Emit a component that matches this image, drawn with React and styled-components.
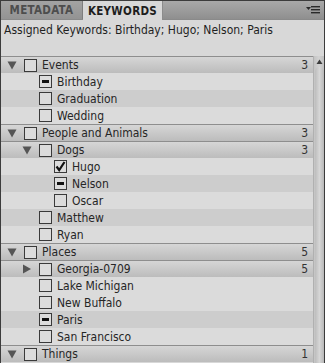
import styled, { createGlobalStyle } from "styled-components";

const GlobalStyle = createGlobalStyle`
  html, body {
    margin: 0;
    padding: 0;
    background: #d6d6d6;
  }
  * { box-sizing: border-box; }
`;

const Panel = styled.div`
  width: 325px;
  height: 363px;
  display: flex;
  flex-direction: column;
  border: 1px solid #3c3c3c;
  border-bottom: none;
  background: #d8d8d8;
  font-family: "DejaVu Sans Condensed", "DejaVu Sans", "Liberation Sans", sans-serif;
  font-stretch: semi-condensed;
  color: #262626;
  overflow: hidden;
`;

const TabBar = styled.div`
  height: 19px;
  display: flex;
  align-items: stretch;
  background: linear-gradient(#a9a9a9, #8f8f8f);
  border-bottom: 1px solid #8a8a8a;
`;

const Tab = styled.div`
  display: flex;
  align-items: center;
  justify-content: center;
  width: ${(p) => p.$width}px;
  font-size: 11.5px;
  font-weight: bold;
  letter-spacing: 0.3px;
  color: ${(p) => (p.$active ? "#1e1e1e" : "#4d4d4d")};
  background: ${(p) =>
    p.$active ? "#d8d8d8" : "linear-gradient(#a3a3a3, #939393)"};
  border-right: 1px solid ${(p) => (p.$active ? "#8c8c8c" : "#7e7e7e")};
  margin-bottom: ${(p) => (p.$active ? "-1px" : "0")};
`;

const TabSpacer = styled.div`
  flex: 1;
  display: flex;
  align-items: center;
  justify-content: flex-end;
  padding-right: 4px;
`;

const Assigned = styled.div`
  height: 36px;
  padding: 3px 0 0 3px;
  font-size: 12px;
  color: #1f1f1f;
`;

const TreeArea = styled.div`
  flex: 1;
  display: flex;
  min-height: 0;
`;

const TreeList = styled.div`
  flex: 1;
  display: flex;
  flex-direction: column;
`;

const Row = styled.div`
  height: 17px;
  flex: none;
  display: flex;
  align-items: center;
  padding-left: ${(p) => 6 + p.$level * 15}px;
  padding-right: 5px;
  font-size: 12px;
  background: ${(p) =>
    p.$header
      ? "linear-gradient(#d6d6d6, #bcbcbc)"
      : p.$shade
      ? "#cdcdcd"
      : "#dbdbdb"};
  border-top: ${(p) => (p.$header ? "1px solid #8e8e8e" : "none")};
`;

const Toggle = styled.div`
  width: 17px;
  height: 13px;
  display: flex;
  align-items: center;
  flex: none;
`;

const Box = styled.div`
  width: 13px;
  height: 13px;
  flex: none;
  border: 1px solid #3a3a3a;
  background: #dcdcdc;
  display: flex;
  align-items: center;
  justify-content: center;
  margin-right: 5px;
`;

const Dash = styled.div`
  width: 7px;
  height: 3px;
  background: #111;
`;

const Label = styled.span`
  flex: 1;
  white-space: nowrap;
`;

const Count = styled.span`
  color: #333;
`;

const Scrollbar = styled.div`
  width: 11px;
  flex: none;
  display: flex;
  flex-direction: column;
  align-items: center;
  background: linear-gradient(90deg, #c4c4c4, #d2d2d2, #c0c0c0);
  border-left: 1px solid #b0b0b0;
`;

const Thumb = styled.div`
  width: 9px;
  flex: 1;
  margin: 2px 0 0;
  border-radius: 5px 5px 0 0;
  background: linear-gradient(90deg, #bdbdbd, #d6d6d6, #b8b8b8);
`;

const rows = [
  { label: "Events", level: 0, header: true, open: true, count: 3 },
  { label: "Birthday", level: 1, state: "mixed" },
  { label: "Graduation", level: 1, shade: true },
  { label: "Wedding", level: 1 },
  { label: "People and Animals", level: 0, header: true, open: true, count: 3 },
  { label: "Dogs", level: 1, header: true, open: true, count: 3 },
  { label: "Hugo", level: 2, state: "checked" },
  { label: "Nelson", level: 2, state: "mixed", shade: true },
  { label: "Oscar", level: 2 },
  { label: "Matthew", level: 1, shade: true },
  { label: "Ryan", level: 1 },
  { label: "Places", level: 0, header: true, open: true, count: 5 },
  { label: "Georgia-0709", level: 1, header: true, open: false, count: 5 },
  { label: "Lake Michigan", level: 1 },
  { label: "New Buffalo", level: 1 },
  { label: "Paris", level: 1, state: "mixed", shade: true },
  { label: "San Francisco", level: 1 },
  { label: "Things", level: 0, header: true, open: true, count: 1 },
];

function Triangle({ open }) {
  return open ? (
    <svg width="10" height="9" viewBox="0 0 10 9">
      <path d="M0.5 0.5 H9.5 L5 8.5 Z" fill="#555" />
    </svg>
  ) : (
    <svg width="10" height="10" viewBox="0 0 10 10">
      <path d="M1 0.5 L9 5 L1 9.5 Z" fill="#555" />
    </svg>
  );
}

function Check({ state }) {
  return (
    <Box>
      {state === "mixed" && <Dash />}
      {state === "checked" && (
        <svg width="11" height="11" viewBox="0 0 11 11">
          <path
            d="M1.5 5.5 L4.2 9 L9.5 1"
            fill="none"
            stroke="#111"
            strokeWidth="2.2"
          />
        </svg>
      )}
    </Box>
  );
}

function MenuIcon() {
  return (
    <svg width="14" height="8" viewBox="0 0 14 8">
      <path d="M0 1 H5 L2.5 4 Z" fill="#2a2a2a" />
      <rect x="5" y="0" width="9" height="1.4" fill="#2a2a2a" />
      <rect x="5" y="3" width="9" height="1.4" fill="#2a2a2a" />
      <rect x="5" y="6" width="9" height="1.4" fill="#2a2a2a" />
    </svg>
  );
}

export default function App() {
  return (
    <>
      <GlobalStyle />
      <Panel>
        <TabBar>
          <Tab $width={82}>METADATA</Tab>
          <Tab $width={80} $active>
            KEYWORDS
          </Tab>
          <TabSpacer>
            <MenuIcon />
          </TabSpacer>
        </TabBar>
        <Assigned>Assigned Keywords: Birthday; Hugo; Nelson; Paris</Assigned>
        <TreeArea>
          <TreeList>
            {rows.map((r) => (
              <Row
                key={r.label}
                $level={r.level}
                $header={r.header}
                $shade={r.shade}
              >
                <Toggle>{r.header && <Triangle open={r.open} />}</Toggle>
                <Check state={r.state} />
                <Label>{r.label}</Label>
                {r.count && <Count>{r.count}</Count>}
              </Row>
            ))}
          </TreeList>
          <Scrollbar>
            <svg width="7" height="6" viewBox="0 0 7 6" style={{ marginTop: 3 }}>
              <path d="M3.5 0.5 L6.5 5 H0.5 Z" fill="#3c3c3c" />
            </svg>
            <Thumb />
          </Scrollbar>
        </TreeArea>
      </Panel>
    </>
  );
}
